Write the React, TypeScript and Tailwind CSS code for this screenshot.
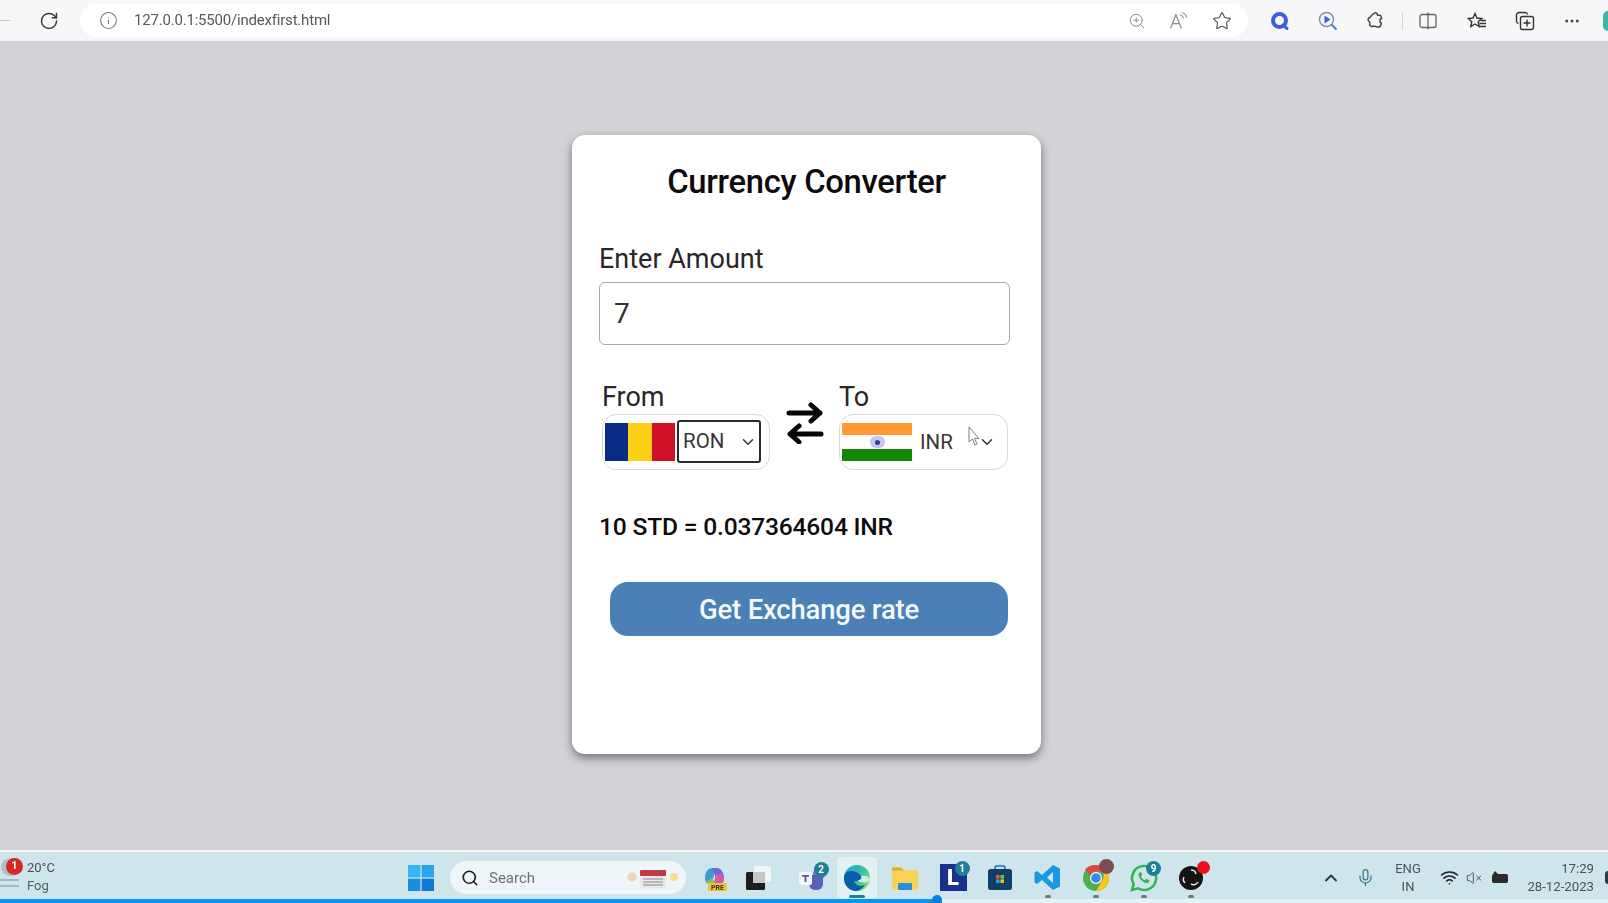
import React from "react";
import { ChevronDown, ChevronUp, Info, Mic, MoreHorizontal, RotateCw, Search, Star, VolumeX, Wifi, ZoomIn } from "lucide-react";

const Badge = ({ n, c = "bg-[#1f7f96]" }: { n?: string; c?: string }) => (
  <span className={`absolute -top-[3px] -right-[3px] flex h-[15px] w-[15px] items-center justify-center rounded-full text-[10px] font-bold text-white ${c}`}>{n}</span>
);

const TaskIcon = ({ children, dot, w = "w-[47px]" }: { children: React.ReactNode; dot?: boolean; w?: string }) => (
  <div className={`relative flex h-full shrink-0 items-center justify-center ${w}`}>
    {children}
    {dot && <span className="absolute bottom-[5px] left-1/2 h-[3px] w-[6px] -translate-x-1/2 rounded-full bg-[#6d7d84]" />}
  </div>
);

const WinLogo = () => (
  <svg width="26" height="26" viewBox="0 0 26 26">
    <rect x="0" y="0" width="12.4" height="12.4" fill="#35b5f2" />
    <rect x="13.6" y="0" width="12.4" height="12.4" fill="#2aa5ec" />
    <rect x="0" y="13.6" width="12.4" height="12.4" fill="#1a8ddf" />
    <rect x="13.6" y="13.6" width="12.4" height="12.4" fill="#0f7ad2" />
  </svg>
);

const Copilot = () => (
  <svg width="26" height="26" viewBox="0 0 26 26">
    <path d="M4 13c0-6 3-10 7-10h4l-4 15H7c-2 0-3-2-3-5z" fill="#3f9bd0" />
    <path d="M11 3h5c4 0 6 4 7 9l-8 1z" fill="#6a68d8" />
    <path d="M15 9h5c2 0 3 2 3 5 0 4-3 7-6 7h-5z" fill="#d957a8" />
    <path d="M5 17l6-4 3 4-3 4H8z" fill="#8fbf63" />
    <rect x="7" y="18" width="19" height="8" rx="1" fill="#f4c531" />
    <text x="16.5" y="25" fontSize="7" fontWeight="700" textAnchor="middle" fill="#333" fontFamily="Roboto, sans-serif">PRE</text>
  </svg>
);

const TaskView = () => (
  <svg width="27" height="26" viewBox="0 0 27 26">
    <rect x="9" y="1" width="17" height="16" rx="2" fill="#f3f6f7" />
    <rect x="1" y="7" width="19" height="18" rx="1.5" fill="#1d1d1d" />
    <rect x="8" y="7" width="12" height="11" fill="#c4c6c7" />
  </svg>
);

const Teams = () => (
  <svg width="28" height="26" viewBox="0 0 28 26">
    <circle cx="21" cy="9" r="6" fill="#6f74c9" />
    <path d="M11 10h14v9a6 6 0 0 1-6 6h-2a6 6 0 0 1-6-6z" fill="#5a5fbd" />
    <rect x="1" y="7" width="13" height="13" rx="2" fill="#f6f7fb" />
    <path d="M4 10h7v1.8H8.4V17H6.6v-5.2H4z" fill="#4f54ad" />
  </svg>
);

const Edge = () => (
  <svg width="28" height="28" viewBox="0 0 28 28">
    <defs>
      <linearGradient id="edgeA" x1="0" y1="0" x2="1" y2="0.6">
        <stop offset="0" stopColor="#1aa6d8" />
        <stop offset="0.65" stopColor="#35c1a6" />
        <stop offset="1" stopColor="#7fe36a" />
      </linearGradient>
    </defs>
    <circle cx="14" cy="14" r="13" fill="url(#edgeA)" />
    <path d="M1 14C1 7 8 6 13 8c5 2 7 6 4 9h-6c1 4 6 6 11 4-3 4-6 6-9 6-7 0-12-6-12-13z" fill="#0b5fa8" />
    <path d="M27 16c0 2-4 3-9 2-2 0-3-1-3-2 3 0 4-2 3-4 3-1 9 0 9 4z" fill="#d0e8ee" />
  </svg>
);

const Folder = () => (
  <svg width="28" height="26" viewBox="0 0 28 26">
    <path d="M1 4a2 2 0 0 1 2-2h7l3 3h13a1 1 0 0 1 1 1v17a2 2 0 0 1-2 2H3a2 2 0 0 1-2-2z" fill="#f7d455" />
    <path d="M1 2.5h9l3 3H1z" fill="#e4ab2b" />
    <rect x="7" y="18" width="14" height="7" rx="1" fill="#2a8fd8" />
  </svg>
);

const LIcon = () => (
  <div className="relative flex h-[27px] w-[27px] items-center justify-center bg-[#1b2f8f]">
    <span className="font-['Roboto',sans-serif] text-[22px] leading-none font-black text-white">L</span>
    <Badge n="1" />
  </div>
);

const Store = () => (
  <svg width="26" height="26" viewBox="0 0 26 26">
    <path d="M8 4V2.5A1.5 1.5 0 0 1 9.5 1h7A1.5 1.5 0 0 1 18 2.500V4" stroke="#1f6ea8" strokeWidth="1.6" fill="none" />
    <rect x="1" y="4" width="24" height="21" rx="2.5" fill="#123f66" />
    <rect x="9" y="10" width="3.600" height="3.600" fill="#e8542f" />
    <rect x="13.400" y="10" width="3.600" height="3.600" fill="#7fba2c" />
    <rect x="9" y="14.400" width="3.600" height="3.600" fill="#1fa5e8" />
    <rect x="13.400" y="14.400" width="3.600" height="3.600" fill="#f8b916" />
  </svg>
);

const VSCode = () => (
  <svg width="27" height="27" viewBox="0 0 27 27">
    <path d="M19 1l7 3.500v18L19 26 8 16l-5 4-2.500-1.500V8.500L3 7l5 4zM19 8l-6 5.500 6 5.500z" fill="#1c97e2" />
  </svg>
);

const Chrome = () => (
  <svg width="28" height="28" viewBox="0 0 28 28">
    <circle cx="14" cy="14" r="13" fill="#4caf50" />
    <path d="M14 1a13 13 0 0 1 11.300 6.500H14a6.500 6.500 0 0 0-6 4L3 5.500A13 13 0 0 1 14 1z" fill="#dd4b3e" />
    <path d="M25.300 7.500A13 13 0 0 1 14 27l5.600-9.800a6.500 6.500 0 0 0 0-9.700z" fill="#f8c91c" />
    <circle cx="14" cy="14" r="6" fill="#fff" />
    <circle cx="14" cy="14" r="4.800" fill="#3d85f0" />
  </svg>
);

const Whatsapp = () => (
  <svg width="28" height="28" viewBox="0 0 28 28">
    <path d="M14 2a12 12 0 0 0-10.300 18.100L2 26l6-1.700A12 12 0 1 0 14 2z" fill="none" stroke="#2fb457" strokeWidth="2.500" />
    <path d="M10 8c-1.500 1-2 3-.8 5.200 1.300 2.500 3.300 4.400 5.800 5.500 2 .8 3.700 0 4.500-1.500l-.2-1-3-1.400-1.400 1.500c-1.700-.6-3.300-2.200-4-4l1.300-1.300-1.300-3z" fill="#2fb457" />
  </svg>
);

const Obs = () => (
  <svg width="26" height="26" viewBox="0 0 26 26">
    <circle cx="13" cy="13" r="12" fill="#141414" />
    <path d="M13 5a5 5 0 0 1 5 4M7 18a5 5 0 0 1-1-6M20 17a5 5 0 0 1-7 2" stroke="#e6e6e6" strokeWidth="1.500" fill="none" />
  </svg>
);

const ReadAloud = () => (
  <svg width="22" height="18" viewBox="0 0 24 20" fill="none" stroke="#8a8a8c" strokeWidth="1.300">
    <path d="M1.500 18L7.500 3l6 15M3.800 13h7.400" />
    <path d="M12 3c2 .5 3.500 2 4 4M14 .8c3 .7 5 3 5.500 5.500" />
  </svg>
);

const QIcon = () => (
  <svg width="20" height="20" viewBox="0 0 20 20" fill="none">
    <circle cx="9.500" cy="9.500" r="6.500" stroke="#3f5fd6" strokeWidth="4" />
    <path d="M13 14l4 3.500" stroke="#3f5fd6" strokeWidth="3" strokeLinecap="round" />
  </svg>
);

const BingSearch = () => (
  <svg width="20" height="20" viewBox="0 0 20 20" fill="none">
    <circle cx="8.500" cy="8.500" r="7" stroke="#8190a8" strokeWidth="1.500" />
    <path d="M6.500 4.500l6 4-6 4z" fill="#3b63d8" />
    <path d="M13.500 13.500l5 5" stroke="#3b7ce8" strokeWidth="2" />
  </svg>
);

const Puzzle = () => (
  <svg width="20" height="20" viewBox="0 0 20 20" fill="none" stroke="#444" strokeWidth="1.500">
    <path d="M8 2.500c2-1.500 3.500 0 3.500 1.500l3 .5c1 .3 1 1.500 1 3-1.500-.3-2.500 4-.2 4.500-.1 2-.3 3.500-2.300 4-2.500.6-3-1-4.500-.8-1.500.3-3 1-4.500-.7-1-1.300.3-2.500-.5-3.500C1 9 2 6.800 4.500 6c.7-1.500 2-3 3.500-3.500z" />
  </svg>
);

const SplitIcon = () => (
  <svg width="18" height="18" viewBox="0 0 18 18" fill="none" stroke="#666" strokeWidth="1.300">
    <rect x="1" y="2.500" width="16" height="13" rx="2" />
    <path d="M9 .5v17" />
  </svg>
);

const Favs = () => (
  <svg width="20" height="18" viewBox="0 0 20 18" fill="none" stroke="#333" strokeWidth="1.400">
    <path d="M8 1.500l2 4.500 4.800.5-3.600 3.200 1 4.800L8 12l-4.200 2.500 1-4.800L1.200 6.500 6 6z" />
    <path d="M13.500 8.500H19M12.500 11.500H19M12.500 14.500H19" />
  </svg>
);

const Collections = () => (
  <svg width="20" height="20" viewBox="0 0 20 20" fill="none" stroke="#333" strokeWidth="1.400">
    <path d="M3.500 12.500A2.500 2.500 0 0 1 1.500 10V4A2.500 2.500 0 0 1 4 1.500h6A2.500 2.500 0 0 1 12.500 3.500" />
    <rect x="5.500" y="5.500" width="13" height="13" rx="2" />
    <path d="M12 8.500v7M8.500 12h7" />
  </svg>
);

const Cursor = () => (
  <svg width="15" height="21" viewBox="0 0 15 21" className="absolute top-[11px] left-[128px]">
    <path d="M1 1v15l3.500-3 2.500 6 2-1-2.500-5.500H11z" fill="#fff" stroke="#808080" strokeWidth="1" />
  </svg>
);

const RomaniaFlag = () => (
  <div className="flex h-[38px] w-[70px] shrink-0">
    <div className="flex-1 bg-[#0a2b85]" />
    <div className="flex-1 bg-[#fdd015]" />
    <div className="flex-1 bg-[#cf1025]" />
  </div>
);

const IndiaFlag = () => (
  <div className="flex h-[38px] w-[70px] shrink-0 flex-col">
    <div className="h-[12px] bg-[#ff9933]" />
    <div className="flex flex-1 items-center justify-center bg-white">
      <span className="flex h-[12px] w-[15px] items-center justify-center rounded-full bg-[#c5c6ec]">
        <span className="h-[5px] w-[5px] rounded-full bg-[#3c3c9a]" />
      </span>
    </div>
    <div className="h-[12px] bg-[#138808]" />
  </div>
);

export default function App() {
  return (
    <div className="flex h-[903px] w-[1608px] flex-col overflow-hidden bg-[#d4d2d6] font-['Roboto','Noto_Sans',sans-serif]">
      {/* browser toolbar */}
      <header className="flex h-[41px] shrink-0 items-center bg-[#f7f7fa] blur-[0.4px]">
        <div className="flex w-[80px] shrink-0 items-center justify-between pr-[21px]">
          <span className="-ml-[6px] h-[1.500px] w-[16px] bg-[#c6c6c8]" />
          <RotateCw size={20} strokeWidth={1.800} className="text-[#3a3a3a]" />
        </div>
        <div className="flex h-[33px] w-[1168px] shrink-0 items-center rounded-full bg-white pr-[16px] pl-[19px]">
          <Info size={19} strokeWidth={1.300} className="text-[#777]" />
          <span className="ml-[16px] text-[15px] tracking-[-0.2px] text-[#5b565a]">127.0.0.1:5500/indexfirst.html</span>
          <div className="ml-auto flex items-center">
            <ZoomIn size={18} strokeWidth={1.300} className="text-[#8a8a8c]" />
            <span className="ml-[23px]"><ReadAloud /></span>
            <Star size={20} strokeWidth={1.400} className="ml-[21px] text-[#555]" />
          </div>
        </div>
        <div className="flex flex-1 items-center">
          <div className="ml-[22px] flex items-center gap-[28px]">
            <QIcon />
            <BingSearch />
            <Puzzle />
          </div>
          <span className="mx-[16px] h-[18px] w-px bg-[#d4d4d6]" />
          <div className="flex items-center gap-[28px]">
            <SplitIcon />
            <span className="ml-[2px]"><Favs /></span>
            <Collections />
            <MoreHorizontal size={18} strokeWidth={2} className="text-[#444]" />
          </div>
          <span className="ml-auto h-[20px] w-[5px] rounded-l-full bg-[#3ab7a5]" />
        </div>
      </header>

      {/* page */}
      <main className="flex-1 pt-[94px] pl-[572px]">
        <section className="flex h-[619px] w-[469px] flex-col rounded-[13px] bg-white px-[27px] pt-[25px] shadow-[0_4px_10px_rgba(0,0,0,0.45)]">
          <h1 className="text-center text-[32.800px] leading-[44px] font-medium tracking-[-0.3px] text-[#0c0a0c]">Currency Converter</h1>
          <label className="mt-[38px] block text-[27px] leading-[34px] text-[#2a2526]">Enter Amount</label>
          <div className="mt-[6px] flex h-[63px] w-[411px] items-center rounded-[6px] border border-[#a9a9ab] px-[14px] text-[28px] text-[#333]">7</div>
          <div className="mt-[36px] flex items-start pl-[3px]">
            <div className="w-[168px]">
              <div className="text-[27px] leading-[32px] text-[#2a2526]">From</div>
              <div className="mt-[1px] flex h-[56px] items-center gap-[2px] rounded-[14px] border border-[#d9d9d9] pl-[2px]">
                <RomaniaFlag />
                <div className="-mt-[1px] flex h-[43px] w-[84px] items-center justify-between rounded-[3px] border-2 border-[#2b2b2b] pr-[2px] pl-[4px] text-[20.500px] text-[#3a3536]">
                  RON
                  <ChevronDown size={18} strokeWidth={2} className="text-[#333]" />
                </div>
              </div>
            </div>
            <div className="flex w-[69px] justify-center pt-[21px]">
              <svg width="38" height="42" viewBox="0 0 38 42" fill="none" stroke="#050505" strokeWidth="5" strokeLinecap="round" strokeLinejoin="round">
                <path d="M3 11h31M25 3L34 11l-9 8" />
                <path d="M35 32H4M13 24L4 32l9 8" />
              </svg>
            </div>
            <div className="w-[169px]">
              <div className="text-[27px] leading-[32px] text-[#2a2526]">To</div>
              <div className="relative mt-[1px] flex h-[56px] items-center rounded-[14px] border border-[#d9d9d9] pl-[2px]">
                <IndiaFlag />
                <span className="ml-[8px] text-[20.500px] text-[#3a3536]">INR</span>
                <Cursor />
                <ChevronDown size={18} strokeWidth={2} className="absolute top-[18px] left-[138px] text-[#333]" />
              </div>
            </div>
          </div>
          <p className="mt-[39px] text-[24.600px] leading-[36px] font-medium tracking-[-0.2px] text-[#0e0b0c]">10 STD = 0.037364604 INR</p>
          <button className="mt-[37px] ml-[11px] h-[54px] w-[398px] rounded-[18px] bg-[#4a80b5] pt-[1px] text-[27.500px] font-medium tracking-[-0.2px] text-[#f4f8fb]">Get Exchange rate</button>
        </section>
      </main>

      {/* taskbar */}
      <footer className="relative h-[53px] shrink-0 border-t-2 border-[#f2f6f8] bg-[#cfe5ec] blur-[0.3px]">
        <div className="flex h-[51px] items-center">
          <div className="relative flex w-[407px] shrink-0 items-center pl-[27px]">
            <span className="absolute -top-[2px] left-[1px] h-[18px] w-[19px] rounded-full bg-[#b5bfc8]" />
            <span className="absolute -top-[2px] left-[6px] flex h-[17px] w-[17px] items-center justify-center rounded-full bg-[#d5281e] text-[11px] font-bold text-white">1</span>
            <span className="absolute top-[19px] left-0 h-[2px] w-[19px] bg-[#a7b4bc]" />
            <span className="absolute top-[25px] left-0 h-[2px] w-[19px] bg-[#a7b4bc]" />
            <div className="-mt-[1px] text-[13px] leading-[18px] text-[#555c60]">
              <div className="text-[#4a5054]">20°C</div>
              <div>Fog</div>
            </div>
          </div>
          <TaskIcon w="w-[28px]"><WinLogo /></TaskIcon>
          <div className="ml-[15px] flex h-[33px] w-[236px] shrink-0 items-center rounded-full bg-[#eef6fa] pr-[6px] pl-[11px]">
            <Search size={18} strokeWidth={2.200} className="text-[#222]" />
            <span className="ml-[10px] pt-[1px] text-[15px] text-[#6d7376]">Search</span>
            <svg width="54" height="24" viewBox="0 0 54 24" className="ml-auto">
              <circle cx="6" cy="11" r="4.500" fill="#f6d3bd" />
              <circle cx="48" cy="11" r="4" fill="#f6dc90" />
              <rect x="14" y="6" width="26" height="16" rx="1" fill="#e8e8ea" />
              <rect x="14" y="4" width="26" height="6" rx="1" fill="#c43a42" />
              <path d="M17 13h20M17 16h20M17 19h20" stroke="#8a8a90" strokeWidth="1" />
            </svg>
          </div>
          <TaskIcon w="w-[55px]"><Copilot /></TaskIcon>
          <TaskIcon w="w-[34px]"><TaskView /></TaskIcon>
          <div className="w-[12px] shrink-0" />
          <TaskIcon w="w-[49px]"><div className="relative"><Teams /><Badge n="2" /></div></TaskIcon>
          <TaskIcon w="w-[42px]">
            <div className="relative flex h-[41px] w-[40px] items-center justify-center rounded-[4px] bg-[#e3f1f5]">
              <Edge />
              <span className="absolute bottom-0 left-1/2 h-[3px] w-[16px] -translate-x-1/2 rounded-full bg-[#23808f]" />
            </div>
          </TaskIcon>
          <TaskIcon w="w-[54px]"><Folder /></TaskIcon>
          <TaskIcon w="w-[42px]"><LIcon /></TaskIcon>
          <TaskIcon w="w-[52px]"><Store /></TaskIcon>
          <TaskIcon dot w="w-[43px]"><VSCode /></TaskIcon>
          <TaskIcon dot w="w-[53px]">
            <div className="relative"><Chrome /><span className="absolute -top-[5px] -right-[4px] h-[15px] w-[15px] rounded-full bg-[#7d4b52]" /></div>
          </TaskIcon>
          <TaskIcon dot w="w-[44px]"><div className="relative"><Whatsapp /><Badge n="9" /></div></TaskIcon>
          <TaskIcon dot w="w-[50px]">
            <div className="relative"><Obs /><span className="absolute -top-[4px] -right-[6px] h-[13px] w-[13px] rounded-full bg-[#f0101c]" /></div>
          </TaskIcon>
          <div className="ml-[105px] flex flex-1 items-center text-[#4c5256]">
            <ChevronUp size={20} strokeWidth={2.200} className="text-[#333]" />
            <Mic size={19} strokeWidth={1.600} className="ml-[15px] text-[#44788c]" />
            <div className="ml-[18px] w-[30px] text-center text-[13px] leading-[18px]">
              <div>ENG</div>
              <div>IN</div>
            </div>
            <Wifi size={19} strokeWidth={2} className="ml-[17px] text-[#222]" />
            <VolumeX size={16} strokeWidth={1.500} className="ml-[7px] text-[#555]" />
            <svg width="20" height="14" viewBox="0 0 20 14" className="ml-[8px]">
              <rect x="2" y="3" width="16" height="9" rx="2" fill="#2b2b2b" />
              <path d="M3 3l2-3 3 3z" fill="#2b2b2b" />
            </svg>
            <div className="ml-[14px] w-[70px] text-right text-[13.200px] leading-[18px] whitespace-nowrap">
              <div>17:29</div>
              <div>28-12-2023</div>
            </div>
            <span className="ml-auto h-[13px] w-[3px] rounded-l-full bg-[#2b3a44]" />
          </div>
        </div>
        <div className="absolute right-0 bottom-0 left-0 flex h-[4px]">
          <div className="w-[936px] bg-[#0a97f2]" />
          <div className="flex-1 bg-[#e6f2f6]" />
        </div>
        <span className="absolute bottom-0 left-[932px] h-[8px] w-[10px] rounded-t-full bg-[#0a7fe0]" />
      </footer>
    </div>
  );
}
